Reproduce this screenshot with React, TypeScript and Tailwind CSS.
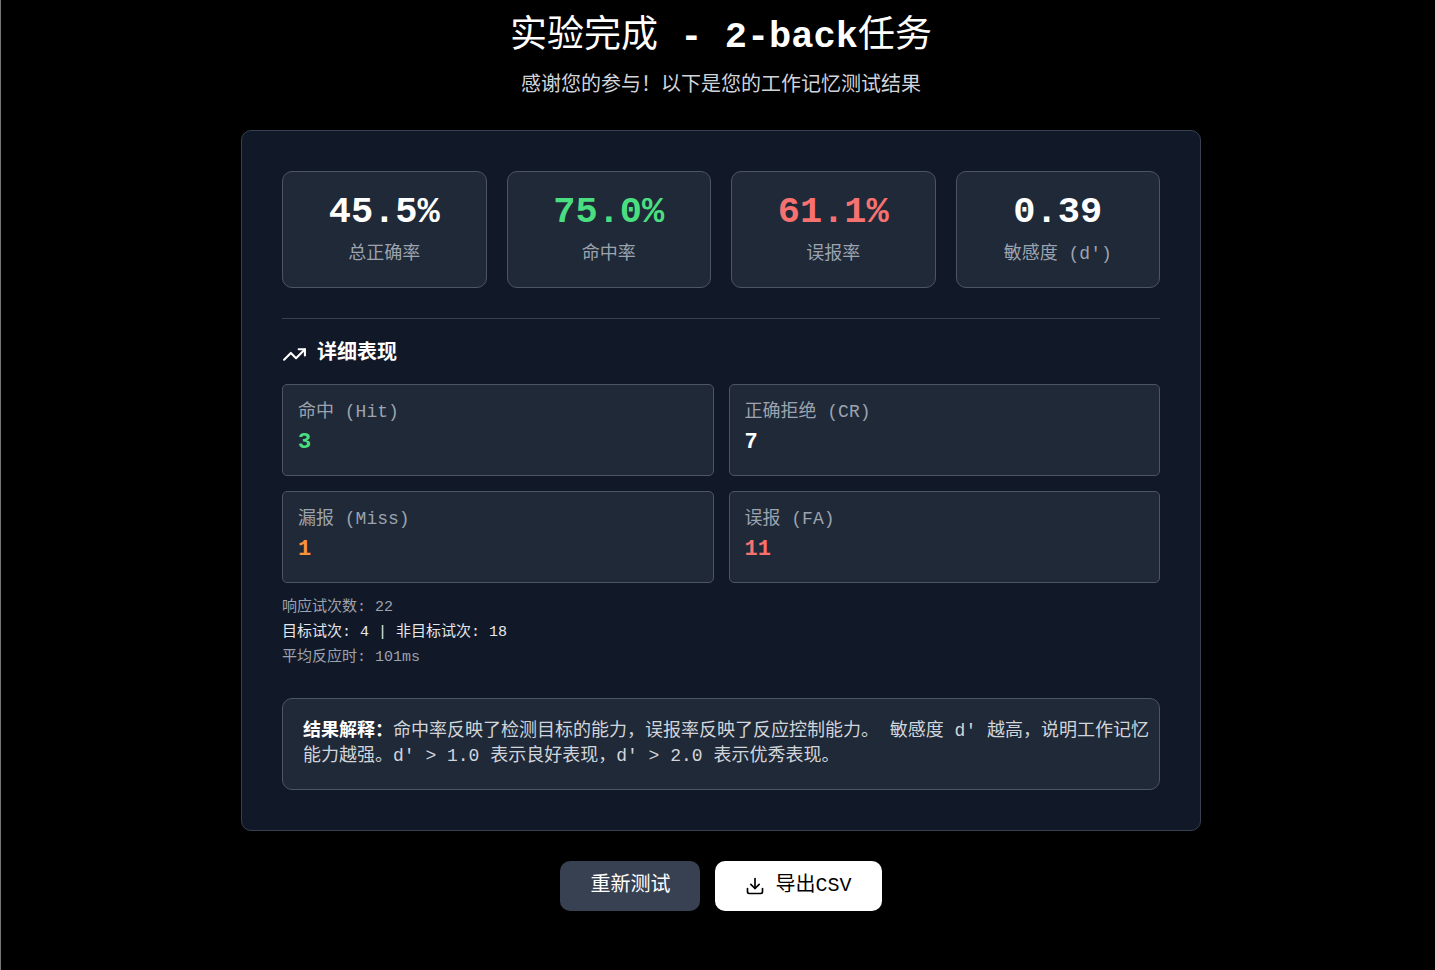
import { Download, TrendingUp } from "lucide-react";

interface Metric {
  label: string;
  value: string;
  color: string;
}

const RATES: Metric[] = [
  { label: "总正确率", value: "45.5%", color: "text-white" },
  { label: "命中率", value: "75.0%", color: "text-[#4ade80]" },
  { label: "误报率", value: "61.1%", color: "text-[#f87171]" },
  { label: "敏感度 (d')", value: "0.39", color: "text-white" },
];

const COUNTS: Metric[] = [
  { label: "命中 (Hit)", value: "3", color: "text-[#4ade80]" },
  { label: "正确拒绝 (CR)", value: "7", color: "text-white" },
  { label: "漏报 (Miss)", value: "1", color: "text-[#fb923c]" },
  { label: "误报 (FA)", value: "11", color: "text-[#f87171]" },
];

function RateCard({ label, value, color }: Metric) {
  return (
    <div className="rounded-[10px] border border-[#4b5563] bg-[#1f2937] p-5 text-center">
      <div className={["text-[37px] leading-[40px] font-bold", color].join(" ")}>{value}</div>
      <div className="mt-[10px] text-[18px] leading-[25px] text-[#9ca3af]">{label}</div>
    </div>
  );
}

function CountCard({ label, value, color }: Metric) {
  return (
    <div className="rounded-[5px] border border-[#4b5563] bg-[#1f2937] p-[15px]">
      <div className="text-[18px] leading-[25px] text-[#9ca3af]">{label}</div>
      <div className={["text-[22px] leading-[35px] font-bold", color].join(" ")}>{value}</div>
    </div>
  );
}

export default function App() {
  return (
    <div className="min-h-screen border-l border-[#777777] bg-black pt-[15px] pl-1.5 font-['Liberation_Mono','Noto_Sans_CJK_SC',monospace] text-white">
      <main className="mx-auto w-full max-w-[960px]">
        <header className="text-center">
          <h1 className="text-[37px] leading-[45px]">
            实验完成<span className="font-bold"> - 2-back</span>任务
          </h1>
          <p className="mt-3 text-[20px] leading-[28px] text-[#d1d5db]">
            感谢您的参与！以下是您的工作记忆测试结果
          </p>
        </header>

        <section className="mt-[30px] rounded-[10px] border border-[#374151] bg-[#111827] p-10">
          <div className="grid grid-cols-4 gap-5">
            {RATES.map((m) => (
              <RateCard key={m.label} {...m} />
            ))}
          </div>

          {/* detailed counts */}
          <div className="mt-[30px] border-t border-[#374151] pt-5">
            <h2 className="flex items-center gap-[10px] text-[20px] leading-[30px] font-bold">
              <TrendingUp size={25} aria-hidden="true" />
              详细表现
            </h2>
            <div className="mt-[15px] grid grid-cols-2 gap-[15px]">
              {COUNTS.map((m) => (
                <CountCard key={m.label} {...m} />
              ))}
            </div>
            <div className="mt-3 text-[15px] leading-[25px] text-[#9ca3af]">
              <p>响应试次数: 22</p>
              <p className="text-[#e5e7eb]">目标试次: 4 | 非目标试次: 18</p>
              <p>平均反应时: 101ms</p>
            </div>
          </div>

          <div className="mt-7 rounded-[10px] border border-[#4b5563] bg-[#1f2937] py-5 pr-2 pl-5">
            <p className="text-[18px] leading-[25px] text-[#d1d5db]">
              <strong className="text-white">结果解释：</strong>
              命中率反映了检测目标的能力，误报率反映了反应控制能力。 敏感度 d'
              越高，说明工作记忆能力越强。d' &gt; 1.0 表示良好表现，d' &gt; 2.0 表示优秀表现。
            </p>
          </div>
        </section>

        <div className="mt-[30px] flex justify-center gap-[15px] text-[20px] leading-[30px]">
          <button
            type="button"
            className="rounded-[10px] bg-[#374151] px-[30px] py-[10px] text-white hover:bg-[#4b5563]"
          >
            重新测试
          </button>
          <button
            type="button"
            className="flex items-center gap-[10px] rounded-[10px] bg-white px-[30px] py-[10px] text-black hover:bg-[#e5e7eb]"
          >
            <Download size={20} aria-hidden="true" />
            导出CSV
          </button>
        </div>
      </main>
    </div>
  );
}
